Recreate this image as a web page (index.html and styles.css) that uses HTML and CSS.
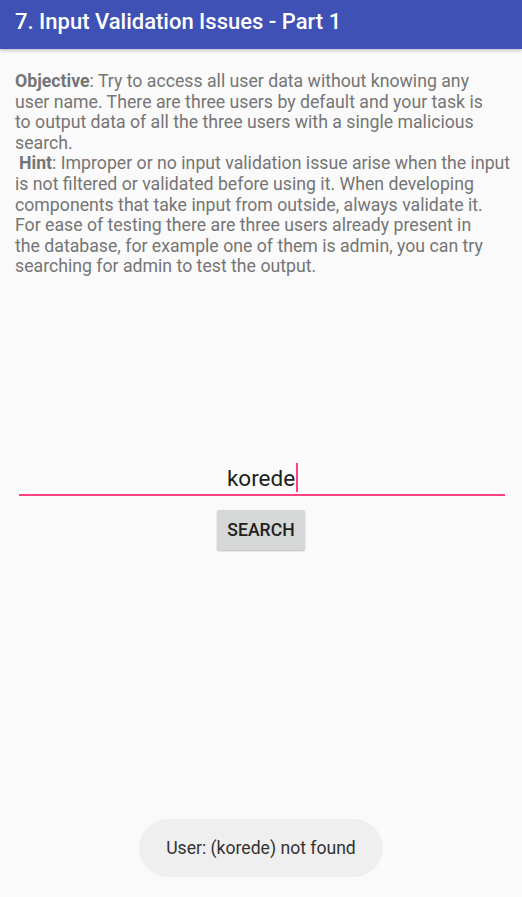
FILE: index.html
```html
<!DOCTYPE html>
<html>
<head>
<meta charset="utf-8">
<link rel="stylesheet" href="styles.css">
</head>
<body>
<header class="appbar">
  <h1 class="title">7. Input Validation Issues - Part 1</h1>
</header>
<main class="content">
  <p class="desc"><b>Objective</b>: Try to access all user data without knowing any<br>user name. There are three users by default and your task is<br>to output data of all the three users with a single malicious<br>search.<br><span class="hint"><b>Hint</b></span>: Improper or no input validation issue arise when the input<br>is not filtered or validated before using it. When developing<br>components that take input from outside, always validate it.<br>For ease of testing there are three users already present in<br>the database, for example one of them is admin, you can try<br>searching for admin to test the output.</p>
  <div class="form">
    <div class="field"><span class="value">korede</span><span class="cursor"></span></div>
    <button class="btn">SEARCH</button>
  </div>
  <div class="toast-wrap">
    <div class="toast">User: (korede) not found</div>
  </div>
</main>
</body>
</html>
```
FILE: styles.css
```css
html, body {
  margin: 0;
  padding: 0;
}
body {
  width: 522px;
  height: 897px;
  background: #fafafa;
  font-family: Roboto, "Noto Sans", sans-serif;
  overflow: hidden;
  display: flex;
  flex-direction: column;
}
.appbar {
  height: 49px;
  background: #3f51b5;
  box-shadow: 0 1px 4px rgba(0,0,0,0.3);
  display: flex;
  align-items: center;
  padding: 0 15px;
  flex-shrink: 0;
  position: relative;
  z-index: 1;
}
.title {
  margin: 0;
  font-size: 22px;
  font-weight: 500;
  color: #fff;
  padding-bottom: 7px;
}
.content {
  flex: 1;
  display: flex;
  flex-direction: column;
}
.desc {
  margin: 22px 0 0 15px;
  font-size: 17.7px;
  line-height: 20.6px;
  color: #757575;
  white-space: nowrap;
}
.desc b {
  font-weight: 700;
}
.hint {
  padding-left: 4px;
}
.form {
  margin-top: 181px;
  display: flex;
  flex-direction: column;
  align-items: center;
}
.field {
  width: 486px;
  height: 38px;
  border-bottom: 2px solid #ff4081;
  display: flex;
  justify-content: center;
  align-items: center;
  box-sizing: border-box;
  padding-top: 4px;
  margin-left: 1px;
}
.value {
  font-size: 22.5px;
  color: #212121;
  padding-left: 2px;
}
.cursor {
  width: 2px;
  height: 29px;
  background: #ff4081;
  margin-left: 1px;
}
.btn {
  margin-top: 14px;
  width: 88px;
  height: 40px;
  border: none;
  border-radius: 2px;
  background: #d6d7d7;
  box-shadow: 0 1px 2px rgba(0,0,0,0.25);
  font-family: Roboto, sans-serif;
  font-size: 17.6px;
  font-weight: 500;
  color: #222;
  padding: 0;
}
.toast-wrap {
  margin-top: auto;
  margin-bottom: 20px;
  display: flex;
  justify-content: center;
}
.toast {
  height: 58px;
  padding: 0 27px;
  border-radius: 29px;
  background: #efefef;
  display: flex;
  align-items: center;
  font-size: 17.6px;
  color: #333;
}
```
